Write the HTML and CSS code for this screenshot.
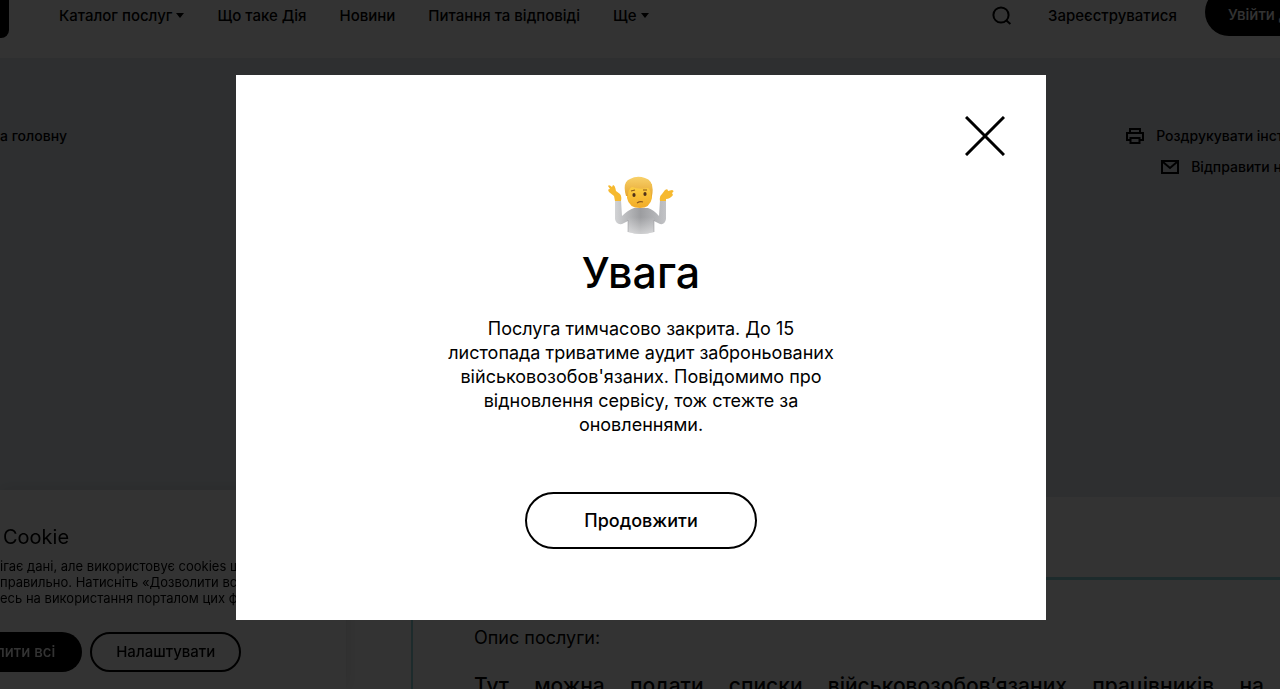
FILE: index.html
```html
<!DOCTYPE html>
<html lang="uk">
<head>
    <meta charset="UTF-8">
    <meta name="viewport" content="width=device-width, initial-scale=1.0">
    <title>Дія</title>
    <link rel="stylesheet" href="styles.css">
</head>
<body>
    <div class="page">
        <header class="header">
            <div class="logo"></div>
            <nav class="nav">
                <a href="#" class="has-menu">Каталог послуг</a>
                <a href="#">Що таке Дія</a>
                <a href="#">Новини</a>
                <a href="#">Питання та відповіді</a>
                <a href="#" class="has-menu">Ще</a>
            </nav>
            <div class="account">
                <button class="search-btn" aria-label="Пошук">
                    <svg width="20" height="20" viewBox="0 0 20 20" fill="none" stroke="#000" stroke-width="2">
                        <circle cx="9" cy="9" r="7.6"/>
                        <path d="M14.4 14.4L18.4 18"/>
                    </svg>
                </button>
                <a href="#">Зареєструватися</a>
                <button class="login-btn">Увійти до кабінету</button>
            </div>
        </header>

        <section class="hero">
            <a href="#">а головну</a>
            <div class="tools">
                <a href="#" class="tool">
                    <svg width="18" height="16" viewBox="0 0 18 16" fill="none" stroke="#000" stroke-width="2">
                        <path d="M4 4V1h10v3M4 12H1V5h16v7h-3"/>
                        <path d="M4.5 10h9v5h-9z"/>
                    </svg>
                    Роздрукувати інструкцію
                </a>
                <a href="#" class="tool mail">
                    <svg width="18" height="14" viewBox="0 0 18 14" fill="none" stroke="#000" stroke-width="2">
                        <path d="M1 1h16v12H1z"/>
                        <path d="M2 2l7 6 7-6"/>
                    </svg>
                    Відправити на пошту
                </a>
            </div>
        </section>

        <main class="content">
            <div class="card">
                <p class="card-label">Опис послуги:</p>
                <p class="card-text">Тут можна подати списки військовозобов’язаних працівників на</p>
            </div>
        </main>
    </div>

    <div class="cookie">
        <h3>Cookie</h3>
        <p>ігає дані, але використовує cookies щоб<br>правильно. Натисніть «Дозволити всі»,<br>есь на використання порталом цих файлів</p>
        <div class="cookie-btns">
            <button class="allow">лити всі</button>
            <button class="setup">Налаштувати</button>
        </div>
    </div>

    <div class="overlay">
        <div class="modal" role="dialog" aria-labelledby="modal-title">
            <button class="close" aria-label="Закрити">
                <svg width="40" height="40" viewBox="0 0 40 40" stroke="#000" stroke-width="3">
                    <path d="M1 1L39 39M39 1L1 39"/>
                </svg>
            </button>
            <svg class="shrug" width="66" height="60" viewBox="0 0 66 60">
                <defs>
                    <linearGradient id="shirt" x1="0" y1="0" x2="1" y2="0">
                        <stop offset="0" stop-color="#d2d3d5"/>
                        <stop offset="0.5" stop-color="#9c9da0"/>
                        <stop offset="1" stop-color="#c2c3c6"/>
                    </linearGradient>
                    <linearGradient id="shade" x1="0" y1="0" x2="0" y2="1">
                        <stop offset="0.3" stop-color="#fff" stop-opacity="0"/>
                        <stop offset="1" stop-color="#fff" stop-opacity="0.5"/>
                    </linearGradient>
                    <linearGradient id="skin" x1="0" y1="0" x2="0" y2="1">
                        <stop offset="0" stop-color="#fdd348"/>
                        <stop offset="1" stop-color="#f2ab27"/>
                    </linearGradient>
                    <linearGradient id="hair" x1="0" y1="0" x2="0" y2="1">
                        <stop offset="0" stop-color="#f8d16a"/>
                        <stop offset="1" stop-color="#e6a52f"/>
                    </linearGradient>
                </defs>
                <path fill="url(#shirt)" d="M7 24H13L14 40Q20 34 26 32H40Q46 34 51 40L52 24H58V43Q57 49 52 48L46 45V56Q33 60 20 56V45L14 48Q8 49 7 43Z"/>
                <path fill="url(#shade)" d="M20 34H46V56Q33 60 20 56Z"/>
                <path fill="none" stroke="#8f9094" stroke-opacity="0.5" d="M20 44V56M46 44V56"/>
                <path fill="#f6b92f" d="M7 25L6 20L1 16Q-1 13 2 13L0 10Q1 8 4 11L5 9Q7 9 8 15L12 18Q14 20 13 25ZM52 25Q51 20 54 18L57 14Q60 12 60 15L64 14Q67 15 64 17L65 19Q62 23 58 23V25Z"/>
                <path fill="url(#skin)" d="M19 8H44V22Q42 32 32 32Q21 32 19 22Z"/>
                <path fill="url(#hair)" d="M18 20Q14 6 22 3Q29-1 37 2Q47 5 44 20L43 21Q43 14 40 12Q31 14 24 11Q20 13 20 20Z"/>
                <ellipse cx="26" cy="19" rx="1.6" ry="2" fill="#503119"/>
                <ellipse cx="37" cy="18" rx="1.6" ry="2" fill="#503119"/>
                <path fill="none" stroke="#8a551b" stroke-width="1.2" d="M23 15l4-1M35 14l4 0M29 27q3-2 6-1"/>
            </svg>
            <h1 id="modal-title">Увага</h1>
            <p>Послуга тимчасово закрита. До 15<br>листопада триватиме аудит заброньованих<br>військовозобов'язаних. Повідомимо про<br>відновлення сервісу, тож стежте за<br>оновленнями.</p>
            <button class="continue">Продовжити</button>
        </div>
    </div>
</body>
</html>
```
FILE: styles.css
```css
* {
    margin: 0;
    padding: 0;
    box-sizing: border-box;
}
html, body {
    height: 100%;
    overflow: hidden;
}
body {
    font-family: Inter, "Liberation Sans", sans-serif;
    font-size: 14px;
    font-weight: 500;
    line-height: 16px;
    color: #000;
    background: #fff;
}
a {
    color: inherit;
    text-decoration: none;
    white-space: nowrap;
}
button {
    font: inherit;
    color: inherit;
    background: none;
    border: 0;
    white-space: nowrap;
    cursor: pointer;
}
.page {
    height: 100%;
    overflow: hidden;
}
.header {
    display: flex;
    align-items: flex-start;
    height: 58px;
    font-size: 15px;
}
.logo {
    width: 9px;
    height: 38px;
    background: #000;
    border-bottom-right-radius: 8px;
}
.nav {
    display: flex;
    gap: 33px;
    padding: 8px 0 0 50px;
}
.has-menu::after {
    content: "";
    display: inline-block;
    margin-left: 4px;
    vertical-align: 3px;
    border: 4px solid transparent;
    border-top: 5px solid #000;
    border-bottom: 0;
}
.account {
    display: flex;
    align-items: flex-start;
    margin-left: auto;
    margin-right: -108px;
}
.account a {
    margin: 8px 28px 0 36px;
}
.search-btn {
    height: 20px;
    margin-top: 6px;
}
.login-btn {
    height: 48px;
    margin-top: -12px;
    padding: 6px 23px 0;
    color: #fff;
    background: #000;
    border-radius: 24px;
}
.hero {
    display: flex;
    justify-content: space-between;
    height: 439px;
    padding-top: 70px;
    background: #e6ecf1;
}
.tools {
    display: flex;
    flex-direction: column;
    gap: 15px;
    margin-right: -57px;
}
.tool {
    display: flex;
    align-items: center;
    gap: 12px;
}
.mail {
    padding-left: 35px;
}
.content {
    padding: 80px 0 0 411px;
}
.card {
    margin-right: -50px;
    padding: 46px 64px 40px 61px;
    border: 2px solid #8fd5dc;
    border-top-width: 3px;
}
.card-label {
    font-size: 18px;
    font-weight: 400;
    line-height: 24px;
}
.card-text {
    margin-top: 22px;
    font-size: 21px;
    line-height: 28px;
    text-align-last: justify;
}
.cookie {
    position: fixed;
    left: 0;
    bottom: 0;
    width: 346px;
    height: 199px;
    padding-top: 33px;
    background: #fff;
    box-shadow: 0 0 16px rgba(0, 0, 0, 0.12);
    overflow: hidden;
}
.cookie h3 {
    padding-left: 3px;
    font-size: 20px;
    font-weight: 400;
    line-height: 28px;
}
.cookie p {
    margin-top: 7px;
    font-size: 13px;
    font-weight: 400;
    white-space: nowrap;
}
.cookie-btns {
    display: flex;
    gap: 8px;
    margin-top: 26px;
}
.cookie-btns button {
    height: 40px;
    font-size: 15px;
}
.cookie-btns .allow {
    margin-left: -4px;
    padding-right: 27px;
    color: #fff;
    background: #000;
    border-radius: 0 20px 20px 0;
}
.setup {
    padding: 0 24px;
    border: 2px solid #000;
    border-radius: 20px;
}
.overlay {
    position: fixed;
    inset: 0;
    display: flex;
    justify-content: center;
    align-items: flex-start;
    padding: 75px 0 0 2px;
    background: rgba(0, 0, 0, 0.8);
}
.modal {
    position: relative;
    display: flex;
    flex-direction: column;
    align-items: center;
    width: 100%;
    max-width: 810px;
    padding: 101px 40px 71px;
    background: #fff;
    text-align: center;
}
.close {
    position: absolute;
    top: 41px;
    right: 41px;
    height: 40px;
}
.modal h1 {
    margin-top: 12px;
    font-size: 43px;
    font-weight: 500;
    line-height: 48px;
}
.modal p {
    margin-top: 21px;
    font-size: 18px;
    font-weight: 400;
    line-height: 24px;
}
.continue {
    height: 57px;
    margin-top: 55px;
    padding: 0 57px;
    font-size: 18px;
    border: 2px solid #000;
    border-radius: 29px;
}
```
